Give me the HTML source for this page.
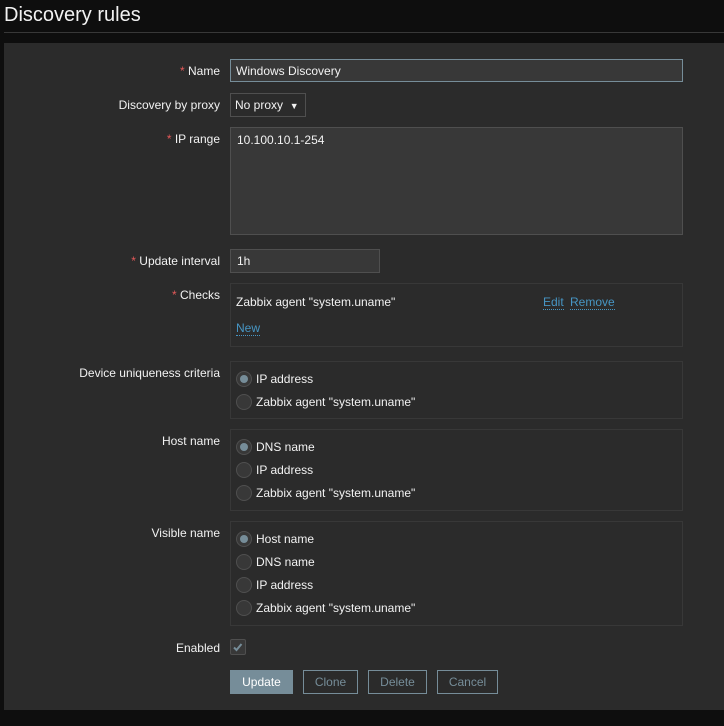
<!DOCTYPE html>
<html><head><style>
*{box-sizing:border-box;margin:0;padding:0}
body{width:724px;height:726px;background:#0e0e0e;font-family:"Liberation Sans",Arial,sans-serif;font-size:12px;color:#f2f2f2;position:relative;overflow:hidden}
.a{position:absolute}
h1{position:absolute;left:4px;top:4px;font-size:20px;font-weight:normal;color:#f2f2f2}
.line{left:4px;top:32px;width:720px;height:1px;background:#383838}
.panel{left:4px;top:43px;width:720px;height:667px;background:#2b2b2b}
.lbl{right:504px;text-align:right;white-space:nowrap}
.req:before{content:"* ";color:#e45959}
.inp{background:#383838;border:1px solid #4f4f4f}
.box{border:1px solid #383838;left:230px;width:453px}
.r{position:absolute;left:5px;width:16px;height:16px;border-radius:50%;background:#383838;border:1px solid #4f4f4f}
.r.on:after{content:"";position:absolute;left:3px;top:3px;width:8px;height:8px;border-radius:50%;background:#768d99}
.rt{position:absolute;left:25px}
.lnk{color:#4796c4;border-bottom:1px dotted #4796c4}
.btn{position:absolute;top:670px;height:24px;border:1px solid #768d99;color:#768d99;text-align:center;line-height:22px;font-size:12px}
</style></head><body>
<h1>Discovery rules</h1>
<div class="a line"></div>
<div class="a panel"></div>

<div class="a lbl req" style="top:64px">Name</div>
<div class="a inp" style="left:230px;top:59px;width:453px;height:23px;border-color:#768d99;padding:4px 5px">Windows Discovery</div>

<div class="a lbl" style="top:98px">Discovery by proxy</div>
<div class="a inp" style="left:230px;top:93px;width:76px;height:24px;background:#2b2b2b;padding:4px 4px">No proxy &nbsp;<span style="font-size:9px">▼</span></div>

<div class="a lbl req" style="top:132px">IP range</div>
<div class="a inp" style="left:230px;top:127px;width:453px;height:108px;padding:5px 6px">10.100.10.1-254</div>

<div class="a lbl req" style="top:254px">Update interval</div>
<div class="a inp" style="left:230px;top:249px;width:150px;height:24px;padding:4px 6px">1h</div>

<div class="a lbl req" style="top:288px">Checks</div>
<div class="a box" style="top:283px;height:64px">
<div class="a" style="left:5px;top:11px">Zabbix agent "system.uname"</div>
<div class="a lnk" style="left:312px;top:11px">Edit</div>
<div class="a lnk" style="left:339px;top:11px">Remove</div>
<div class="a lnk" style="left:5px;top:37px">New</div>
</div>

<div class="a lbl" style="top:366px">Device uniqueness criteria</div>
<div class="a box" style="top:361px;height:58px">
<div class="r on" style="top:9px"></div><div class="rt" style="top:10px">IP address</div>
<div class="r" style="top:32px"></div><div class="rt" style="top:33px">Zabbix agent "system.uname"</div>
</div>

<div class="a lbl" style="top:434px">Host name</div>
<div class="a box" style="top:429px;height:82px">
<div class="r on" style="top:9px"></div><div class="rt" style="top:10px">DNS name</div>
<div class="r" style="top:32px"></div><div class="rt" style="top:33px">IP address</div>
<div class="r" style="top:55px"></div><div class="rt" style="top:56px">Zabbix agent "system.uname"</div>
</div>

<div class="a lbl" style="top:526px">Visible name</div>
<div class="a box" style="top:521px;height:105px">
<div class="r on" style="top:9px"></div><div class="rt" style="top:10px">Host name</div>
<div class="r" style="top:32px"></div><div class="rt" style="top:33px">DNS name</div>
<div class="r" style="top:55px"></div><div class="rt" style="top:56px">IP address</div>
<div class="r" style="top:78px"></div><div class="rt" style="top:79px">Zabbix agent "system.uname"</div>
</div>

<div class="a lbl" style="top:641px">Enabled</div>
<div class="a inp" style="left:230px;top:639px;width:16px;height:16px;border-radius:2px">
<svg width="14" height="14" style="position:absolute;left:0;top:0"><path d="M3 7.5l2.5 2.5 5-6" stroke="#768d99" stroke-width="2" fill="none"/></svg></div>

<div class="btn" style="left:230px;width:63px;background:#768d99;color:#fff;border-color:#768d99">Update</div>
<div class="btn" style="left:303px;width:55px">Clone</div>
<div class="btn" style="left:368px;width:59px">Delete</div>
<div class="btn" style="left:437px;width:61px">Cancel</div>
</body></html>
